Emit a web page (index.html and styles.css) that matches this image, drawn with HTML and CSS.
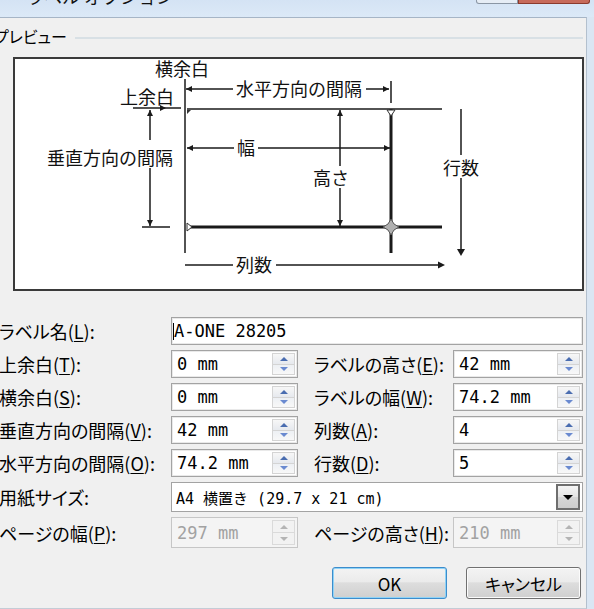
FILE: index.html
```html
<!DOCTYPE html>
<html lang="ja">
<head>
<meta charset="utf-8">
<title>ラベル オプション</title>
<link rel="stylesheet" href="styles.css">
</head>
<body>
<div class="window">
  <div class="titlebar">
    <span class="title">ラベル オプション</span>
    <div class="caption-btns"><span class="cb-minmax"></span><span class="cb-close"></span></div>
  </div>
  <div class="frame-row">
    <div class="client">
      <div class="group-head"><span class="group-title">プレビュー</span><span class="group-line"></span></div>
      <div class="preview">
        <svg class="diagram" viewBox="15 59 567 230" width="567" height="230" xmlns="http://www.w3.org/2000/svg">
          <g stroke="#1a1a1a" stroke-width="1.5" fill="none">
            <line x1="185" y1="79" x2="185" y2="253"/>
            <line x1="187" y1="109" x2="442" y2="109"/>
            <line x1="186" y1="89" x2="389" y2="89"/>
            <line x1="391" y1="81" x2="391" y2="103"/>
            <line x1="133" y1="108" x2="181" y2="108"/>
            <line x1="150" y1="110" x2="150" y2="226"/>
            <line x1="142" y1="227" x2="170" y2="227"/>
            <line x1="187" y1="148" x2="390" y2="148"/>
            <line x1="340" y1="110" x2="340" y2="226"/>
            <line x1="461" y1="109" x2="461" y2="252"/>
            <line x1="185" y1="265" x2="440" y2="265"/>
          </g>
          <g stroke="#1a1a1a" stroke-width="3">
            <line x1="391" y1="109" x2="391" y2="253"/>
            <line x1="187" y1="227" x2="442" y2="227"/>
          </g>
          <g fill="#1a1a1a">
            <polygon points="186,89 192,86 192,92"/>
            <polygon points="389,89 383,86 383,92"/>
            <polygon points="166,108 160,105 160,111"/>
            <polygon points="150,110 147,116 153,116"/>
            <polygon points="150,226 147,220 153,220"/>
            <polygon points="187,148 193,145 193,151"/>
            <polygon points="390,148 384,145 384,151"/>
            <polygon points="340,110 337,116 343,116"/>
            <polygon points="340,226 337,220 343,220"/>
            <polygon points="461,256 457,249 465,249"/>
            <polygon points="445,265 438,261.5 438,268.5"/>
          </g>
          <polygon points="387,110 395,110 391,116" fill="#fff" stroke="#333" stroke-width="1"/>
          <polygon points="187,223 187,231 192,227" fill="#fff" stroke="#333" stroke-width="1"/>
          <polygon points="187,110 191,110 187,114" fill="#333"/>
          <polygon points="391,219 394,224 399,227 394,230 391,235 388,230 383,227 388,224" fill="#b0b0b0" stroke="#555" stroke-width="1"/>
          <g fill="#fff">
            <rect x="233" y="80" width="133" height="19"/>
            <rect x="45" y="140" width="132" height="28"/>
            <rect x="234" y="137" width="24" height="21"/>
            <rect x="311" y="166" width="34" height="22"/>
            <rect x="441" y="155" width="41" height="23"/>
            <rect x="233" y="253" width="43" height="22"/>
          </g>
          <g class="dtext" fill="#111">
            <text x="155" y="75.5">横余白</text>
            <text x="236" y="96">水平方向の間隔</text>
            <text x="120" y="104">上余白</text>
            <text x="47" y="165">垂直方向の間隔</text>
            <text x="237" y="155">幅</text>
            <text x="313" y="185">高さ</text>
            <text x="443" y="175">行数</text>
            <text x="236" y="272">列数</text>
          </g>
        </svg>
      </div>

      <div class="form">
        <label class="lbl">ラベル名(<u>L</u>):</label>
        <div class="input wide"><span class="caret"></span>A-ONE 28205</div>

        <label class="lbl">上余白(<u>T</u>):</label>
        <div class="input"><span class="val">0 mm</span><span class="spin"><span class="up"></span><span class="dn"></span></span></div>
        <label class="lbl right">ラベルの高さ(<u>E</u>):</label>
        <div class="input"><span class="val">42 mm</span><span class="spin"><span class="up"></span><span class="dn"></span></span></div>

        <label class="lbl">横余白(<u>S</u>):</label>
        <div class="input"><span class="val">0 mm</span><span class="spin"><span class="up"></span><span class="dn"></span></span></div>
        <label class="lbl right">ラベルの幅(<u>W</u>):</label>
        <div class="input"><span class="val">74.2 mm</span><span class="spin"><span class="up"></span><span class="dn"></span></span></div>

        <label class="lbl">垂直方向の間隔(<u>V</u>):</label>
        <div class="input"><span class="val">42 mm</span><span class="spin"><span class="up"></span><span class="dn"></span></span></div>
        <label class="lbl right">列数(<u>A</u>):</label>
        <div class="input"><span class="val">4</span><span class="spin"><span class="up"></span><span class="dn"></span></span></div>

        <label class="lbl">水平方向の間隔(<u>O</u>):</label>
        <div class="input"><span class="val">74.2 mm</span><span class="spin"><span class="up"></span><span class="dn"></span></span></div>
        <label class="lbl right">行数(<u>D</u>):</label>
        <div class="input"><span class="val">5</span><span class="spin"><span class="up"></span><span class="dn"></span></span></div>

        <label class="lbl">用紙サイズ:</label>
        <div class="combo"><span class="combo-val">A4 横置き (29.7 x 21 cm)</span><span class="drop"><span class="tri"></span></span></div>

        <label class="lbl">ページの幅(<u>P</u>):</label>
        <div class="input disabled"><span class="val">297 mm</span><span class="spin"><span class="up"></span><span class="dn"></span></span></div>
        <label class="lbl right">ページの高さ(<u>H</u>):</label>
        <div class="input disabled"><span class="val">210 mm</span><span class="spin"><span class="up"></span><span class="dn"></span></span></div>
      </div>

      <div class="buttons">
        <button class="btn default">OK</button>
        <button class="btn">キャンセル</button>
      </div>
    </div>
    <div class="frame-right"></div>
  </div>
</div>
</body>
</html>
```

FILE: styles.css
```css
* { box-sizing: border-box; }

body {
  margin: 0;
  width: 594px;
  height: 609px;
  overflow: hidden;
  background: #dae6f3;
  font-family: "Noto Sans CJK JP", sans-serif;
  color: #000;
}

.window {
  display: flex;
  flex-direction: column;
  height: 609px;
}

.titlebar {
  height: 17px;
  flex: none;
  display: flex;
  justify-content: space-between;
  align-items: flex-start;
  overflow: hidden;
  background: linear-gradient(#d4e3f4, #dce9f7);
}

.title {
  margin-top: -14px;
  margin-left: 26px;
  font-size: 18px;
  line-height: 20px;
  color: #111;
  white-space: nowrap;
}

.caption-btns {
  display: flex;
  margin-right: 4px;
}

.cb-minmax {
  width: 42px;
  height: 4px;
  background: #e6edf5;
  border: 1px solid #8a96a4;
  border-top: none;
  border-radius: 0 0 0 3px;
}

.cb-close {
  width: 72px;
  height: 4px;
  background: #c76a5a;
  border: 1px solid #8b3a2c;
  border-top: none;
  border-radius: 0 0 3px 0;
}

.frame-row {
  flex: 1;
  display: flex;
}

.client {
  flex: 1;
  background: #f0f0f0;
  border-top: 1px solid #a6b5c6;
  border-right: 1px solid #b3c0ce;
  border-bottom: 1px solid #c4ccd6;
  overflow: hidden;
}

.frame-right {
  width: 7px;
  flex: none;
  background: #dae6f3;
}

.group-head {
  display: flex;
  align-items: center;
  height: 20px;
  margin-top: 8px;
  margin-left: -6px;
  margin-right: 3px;
}

.group-title {
  font-size: 16px;
  line-height: 20px;
  white-space: nowrap;
  font-feature-settings: "palt" 1;
}

.group-line {
  flex: 1;
  height: 2px;
  margin-left: 8px;
  margin-top: 4px;
  background: #d8e0e5;
}

.preview {
  margin: 11px 0 0 13px;
  width: 571px;
  height: 234px;
  border: 2px solid #3a3a3a;
  background: #fff;
}

.diagram {
  display: block;
}

.dtext text {
  font-family: "Noto Sans CJK JP", sans-serif;
  font-size: 18px;
}

.form {
  margin-top: 26px;
  display: grid;
  grid-template-columns: 171px 127px 155px 130px;
  grid-template-rows: repeat(5, 28px) 30px 31px;
  row-gap: 5px;
  align-items: stretch;
}

.lbl {
  display: flex;
  align-items: center;
  margin-left: -1px;
  font-size: 18px;
  line-height: 24px;
  white-space: nowrap;
  font-feature-settings: "palt" 1;
}

.lbl u {
  text-underline-offset: 2px;
}

.lbl.right {
  padding-left: 17px;
}

.input {
  display: flex;
  align-items: center;
  border: 1px solid #a3a3a3;
  box-shadow: inset 0 0 0 1px #e9e9e9;
  background: #fff;
  padding-left: 5px;
  font-family: "DejaVu Sans Mono", monospace;
  font-size: 17px;
  color: #000;
  white-space: nowrap;
}

.input.wide {
  grid-column: 2 / 5;
  padding-left: 1px;
}

.caret {
  width: 1px;
  height: 17px;
  background: #000;
}

.val {
  flex: 1;
}

.spin {
  width: 23px;
  align-self: stretch;
  margin: 2px 2px 2px 0;
  display: flex;
  flex-direction: column;
}

.spin .up,
.spin .dn {
  flex: 1;
  display: flex;
  align-items: center;
  justify-content: center;
  border: 1px solid #d4d4d4;
  background: linear-gradient(#f7f7f7, #e6e9ee);
}

.spin .dn {
  border-top: none;
  background: linear-gradient(#edf0f4, #f8f8f8);
}

.spin .up::after {
  content: "";
  border-left: 4px solid transparent;
  border-right: 4px solid transparent;
  border-bottom: 4px solid #4a6db0;
}

.spin .dn::after {
  content: "";
  border-left: 4px solid transparent;
  border-right: 4px solid transparent;
  border-top: 4px solid #6a8ad0;
}

.input.disabled {
  background: #f4f4f4;
  border-color: #c6c6c6;
  box-shadow: none;
  color: #a2a2a2;
}

.input.disabled .spin .up,
.input.disabled .spin .dn {
  background: #f2f2f2;
  border-color: #dadada;
}

.input.disabled .spin .up::after { border-bottom-color: #b4b4b4; }
.input.disabled .spin .dn::after { border-top-color: #b4b4b4; }

.combo {
  grid-column: 2 / 5;
  display: flex;
  align-items: center;
  border: 1px solid #a3a3a3;
  background: #fff;
  padding-left: 4px;
  font-family: "DejaVu Sans Mono", "Noto Sans CJK JP", monospace;
  font-size: 15px;
  white-space: nowrap;
}

.combo-val {
  flex: 1;
}

.drop {
  width: 24px;
  align-self: stretch;
  margin: 1px 2px 1px 0;
  border: 2px solid #6e6e6e;
  background: linear-gradient(#f4f4f4, #e4e4e4 50%, #d6d6d6 51%, #cdcdcd);
  display: flex;
  align-items: center;
  justify-content: center;
}

.drop .tri {
  border-left: 5px solid transparent;
  border-right: 5px solid transparent;
  border-top: 5px solid #000;
}

.buttons {
  display: flex;
  justify-content: flex-end;
  gap: 19px;
  margin-top: 19px;
  padding-right: 5px;
}

.btn {
  width: 115px;
  height: 32px;
  border: 1px solid #707070;
  border-radius: 3px;
  background: linear-gradient(#f3f3f3, #ebebeb 45%, #dddddd 50%, #cfcfcf);
  box-shadow: inset 0 0 0 1px #fbfbfb;
  font-family: "Noto Sans CJK JP", sans-serif;
  font-size: 17px;
  color: #000;
  padding: 0;
  font-feature-settings: "palt" 1;
}

.btn.default {
  border-color: #3c8ccc;
  box-shadow: inset 0 0 0 1px #8fd3f6;
}
```
